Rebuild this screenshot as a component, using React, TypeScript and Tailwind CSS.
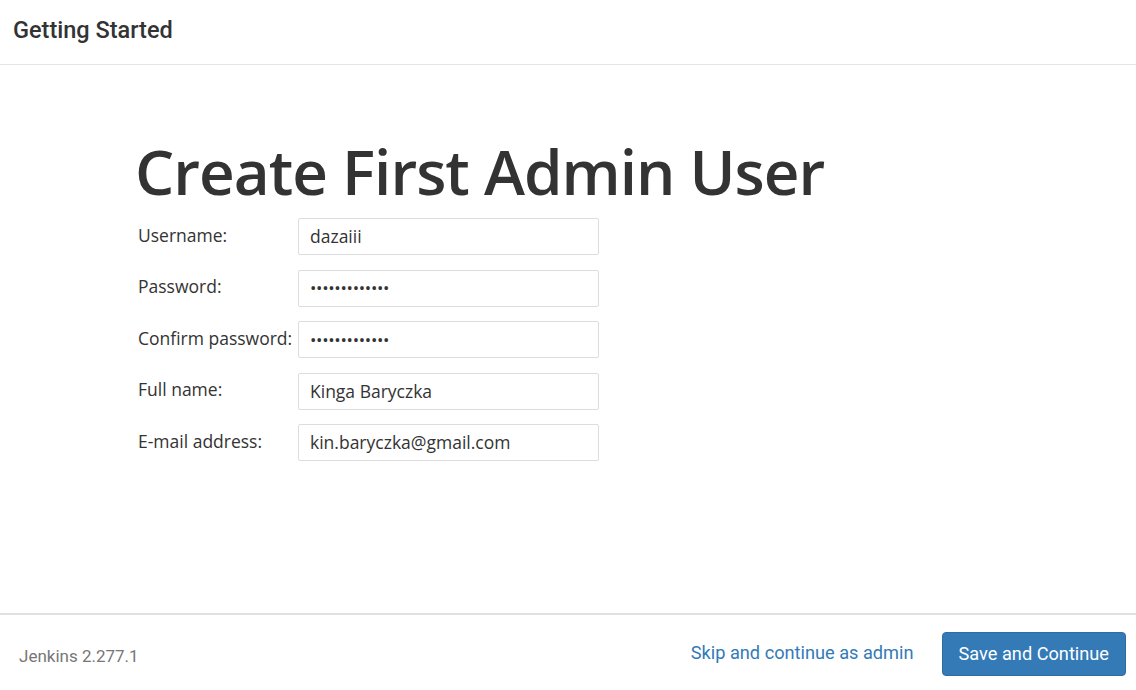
const fields = [
  { label: "Username:", value: "dazaiii", type: "text" },
  { label: "Password:", value: "•••••••••••••", type: "pw" },
  { label: "Confirm password:", value: "•••••••••••••", type: "pw" },
  { label: "Full name:", value: "Kinga Baryczka", type: "text" },
  { label: "E-mail address:", value: "kin.baryczka@gmail.com", type: "text" },
]

const App = () => {
  return (
    <div className="w-[1136px] h-[690px] bg-white flex flex-col overflow-hidden">
      <div className="h-[65px] shrink-0 border-b border-[#e5e5e5] flex items-center px-[13px]">
        <h3 className="font-['Roboto'] text-[23.5px] font-medium text-[#333] leading-none -mt-[2px]">
          Getting Started
        </h3>
      </div>

      <div className="flex-1 pl-[135px] pt-[75px]">
        <h1 className="font-['Open_Sans'] text-[62px] leading-none text-[#333] font-semibold tracking-[-1px]">
          Create First Admin User
        </h1>
        <div className="mt-[16px] flex flex-col gap-[14.5px] pl-[3px]">
          {fields.map((f) => (
            <div key={f.label} className="flex items-center h-[37px]">
              <label className="w-[160px] font-['Open_Sans'] text-[17.5px] text-[#333] -mt-[3px] whitespace-nowrap">
                {f.label}
              </label>
              <div className="w-[301px] h-[37px] border border-[#ddd] rounded-[2px] flex items-center px-[11px] font-['Open_Sans'] text-[#333]">
                {f.type === "pw" ? (
                  <span className="text-[17px] tracking-[-0.3px]">{f.value}</span>
                ) : (
                  <span className="text-[17.5px]">{f.value}</span>
                )}
              </div>
            </div>
          ))}
        </div>
      </div>

      <div className="h-[77px] shrink-0 border-t-2 border-[#e0e0e0] flex items-center justify-between pl-[19px] pr-[10px] font-['Roboto']">
        <span className="text-[17px] text-[#777] mt-[8px]">Jenkins 2.277.1</span>
        <div className="flex items-center gap-[28px]">
          <a className="text-[18.2px] text-[#337ab7]">Skip and continue as admin</a>
          <button className="h-[44px] px-[16px] bg-[#337ab7] border border-[#2e6da4] rounded-[4px] text-white text-[18.2px] mt-[3px]">
            Save and Continue
          </button>
        </div>
      </div>
    </div>
  )
}

export default App
